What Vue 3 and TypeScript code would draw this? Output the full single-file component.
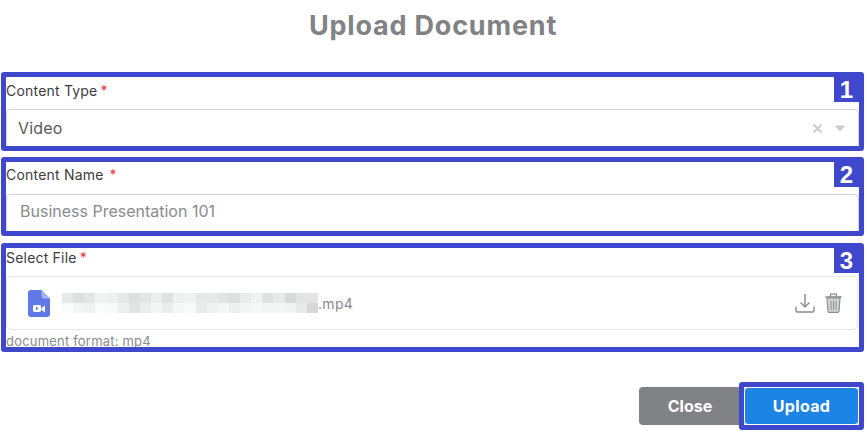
<script setup lang="ts">
const top = [232,222,228,240,238,230,222,228,236,224,238,240,230,232,226,222,234,240,224,232,216,226,228]
const bot = [250,244,240,250,248,238,226,236,244,236,246,248,234,240,244,238,244,246,244,244,242,232,214]
const cells: number[] = [...top, ...bot]
const shade = (v: number) => `rgb(${v},${v + 1},${v + 1})`
</script>

<template>
  <div class="page">
    <h1 class="title">Upload Document</h1>

    <section class="frame">
      <span class="badge">1</span>
      <label class="label first"><span>Content Type</span><b>*</b></label>
      <div class="field select">
        <span class="value">Video</span>
        <svg class="clear" width="11" height="11" viewBox="0 0 11 11"><path d="M1.5 1.5l8 8M9.5 1.5l-8 8" stroke="#cccccc" stroke-width="2" fill="none"/></svg>
        <svg class="caret" width="12" height="7" viewBox="0 0 12 7"><path d="M0.5 0.5h11L6 6.5z" fill="#cccccc"/></svg>
      </div>
    </section>

    <section class="frame">
      <span class="badge">2</span>
      <label class="label"><span>Content Name</span><b class="wide">*</b></label>
      <div class="field name">
        <span class="placeholder">Business Presentation 101</span>
      </div>
    </section>

    <section class="frame file-frame">
      <span class="badge">3</span>
      <label class="label"><span>Select File</span><b>*</b></label>
      <div class="file-box">
        <svg class="file-icon" width="22" height="27" viewBox="0 0 22 27">
          <path d="M3 0h10.5L22 8.5V24a3 3 0 0 1-3 3H3a3 3 0 0 1-3-3V3a3 3 0 0 1 3-3z" fill="#6179e6"/>
          <path d="M13.5 0L22 8.5h-6a2.5 2.5 0 0 1-2.5-2.5z" fill="#a5b3f2"/>
          <rect x="5" y="15" width="8" height="7" rx="1.4" fill="#ffffff"/>
          <path d="M13.5 18l3.5-2.4v6.8L13.5 20z" fill="#ffffff"/>
          <path d="M8 16.8l2.6 1.7L8 20.2z" fill="#6179e6"/>
        </svg>
        <div class="file-name">
          <div class="mosaic">
            <i v-for="(c, i) in cells" :key="i" :style="{ background: shade(c) }"></i>
          </div>
          <span>.mp4</span>
        </div>
        <div class="actions">
          <svg width="20" height="20" viewBox="0 0 20 20" fill="none" stroke="#8a8b8e" stroke-width="1.4">
            <path d="M10 1v13M5.5 9.6L10 14l4.5-4.4"/>
            <path d="M1 13.5v4a1.5 1.5 0 0 0 1.5 1.5h15a1.5 1.5 0 0 0 1.5-1.5v-4"/>
          </svg>
          <svg width="17" height="20" viewBox="0 0 17 20" fill="none" stroke="#8a8b8e">
            <path d="M0.5 4h16" stroke-width="1.6"/>
            <path d="M5.5 3.5V1.2h6v2.3" stroke-width="1.2"/>
            <path d="M2 5h13l-1 13.2a1.3 1.3 0 0 1-1.3 1.2H4.3A1.3 1.3 0 0 1 3 18.2z" fill="#d4d5d7" stroke-width="1.1"/>
            <path d="M6 7.5v9.5M8.5 7.5v9.5M11 7.5v9.5" stroke-width="1"/>
          </svg>
        </div>
      </div>
      <div class="hint">document format: mp4</div>
    </section>

    <footer class="footer">
      <button class="btn close">Close</button>
      <div class="upload-frame">
        <button class="btn upload">Upload</button>
      </div>
    </footer>
  </div>
</template>

<style scoped>
.page {
  width: 868px;
  height: 435px;
  box-sizing: border-box;
  padding: 0 4px 0 1px;
  overflow: hidden;
  font-family: Inter, "Noto Sans", sans-serif;
  background: #ffffff;
  display: flex;
  flex-direction: column;
}
.title {
  margin: 0 0 20px;
  height: 52px;
  line-height: 52px;
  font-size: 27px;
  letter-spacing: 0.8px;
  font-weight: 700;
  color: #808285;
  text-align: center;
  padding-left: 1px;
}
.frame {
  position: relative;
  box-sizing: border-box;
  height: 79px;
  margin-bottom: 6px;
  border: 5px solid #3f48cc;
  border-radius: 3px;
  overflow: hidden;
  display: flex;
  flex-direction: column;
}
.file-frame {
  height: 109px;
  margin-top: 1px;
  margin-bottom: 0;
}
.badge {
  position: absolute;
  top: 0;
  right: 0;
  width: 25px;
  height: 25px;
  background: #3f48cc;
  color: #ffffff;
  font: 700 24px/25px "Liberation Sans", Arial, sans-serif;
  text-align: center;
}
.label {
  height: 26px;
  padding-bottom: 6px;
  box-sizing: content-box;
  line-height: 25px;
  font-size: 14px;
  letter-spacing: 0.2px;
  color: #3c3c3e;
  flex: none;
}
.label.first {
  line-height: 27px;
}
.label b {
  color: #e8333c;
  font-weight: 400;
  margin-left: 3px;
}
.label b.wide {
  margin-left: 6px;
}
.field {
  height: 38px;
  flex: none;
  box-sizing: border-box;
  border: 1px solid #cdd2dd;
  border-radius: 4px;
  display: flex;
  align-items: center;
  font-size: 16px;
}
.select {
  padding: 0 12px 0 11px;
  border-color: #d4d4d6;
  height: 38px;
}
.value {
  flex: 1;
  color: #58595b;
  letter-spacing: 0.2px;
}
.clear {
  margin-right: 11px;
}
.name {
  padding: 0 0 5px 13px;
}
.placeholder {
  color: #8a8b8e;
}
.file-frame .label {
  height: 22px;
  padding-bottom: 6px;
  line-height: 20px;
}
.file-box {
  height: 54px;
  flex: none;
  box-sizing: border-box;
  margin-right: 1px;
  border: 1px solid #e6e6e8;
  border-radius: 5px;
  display: flex;
  align-items: center;
  padding: 0 15px 0 21px;
}
.file-icon {
  flex: none;
  margin-right: 12px;
}
.file-name {
  flex: 1;
  display: flex;
  align-items: center;
  font-size: 14px;
  letter-spacing: 0.3px;
  color: #8a8b8e;
}
.mosaic {
  width: 256px;
  height: 20px;
  display: grid;
  grid-template-columns: repeat(23, 1fr);
  grid-template-rows: repeat(2, 1fr);
}
.mosaic i {
  display: block;
}
.actions {
  display: flex;
  align-items: center;
  gap: 10px;
}
.hint {
  font-size: 13px;
  letter-spacing: 0.2px;
  line-height: 23px;
  color: #8a8b8e;
  white-space: nowrap;
}
.footer {
  margin-top: 30px;
  display: flex;
  justify-content: flex-end;
  align-items: center;
}
.btn {
  height: 38px;
  border: 0;
  border-radius: 4px;
  color: #ffffff;
  font-family: inherit;
  font-size: 16px;
  font-weight: 700;
  padding: 0;
}
.close {
  width: 106px;
  background: #808285;
  margin-right: -6px;
  padding-right: 4px;
}
.upload-frame {
  position: relative;
  box-sizing: border-box;
  width: 125px;
  height: 48px;
  border: 5px solid #3f48cc;
  border-radius: 3px;
  display: flex;
}
.upload {
  flex: 1;
  background: #1b84e4;
  border: 1px solid #ffffff;
  border-radius: 4px;
  letter-spacing: 0.3px;
}
</style>

<style>
html, body { margin: 0; background: #ffffff; }
</style>
